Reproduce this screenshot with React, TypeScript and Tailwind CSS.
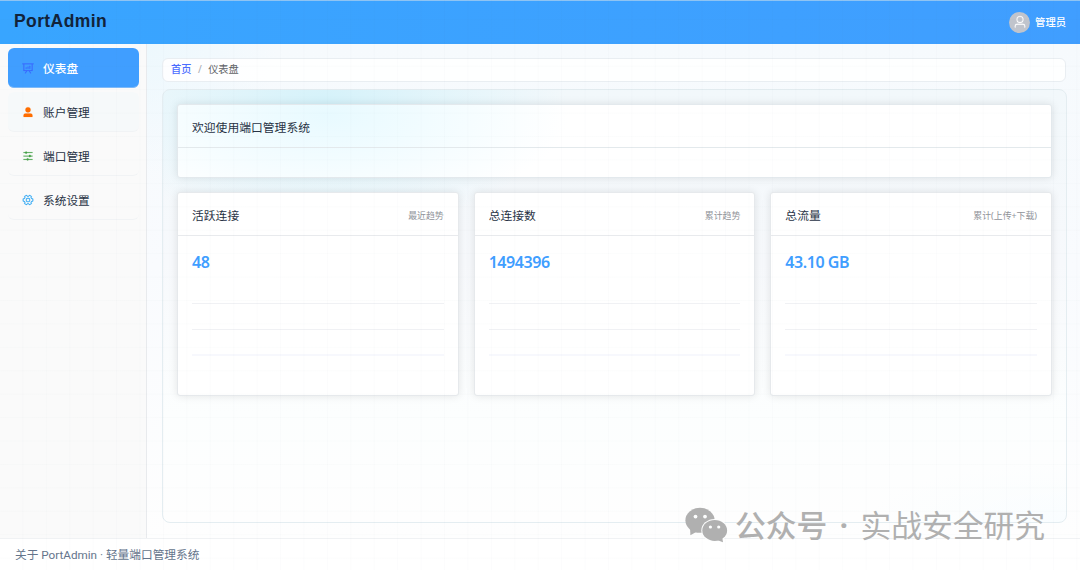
const MENU_ITEMS = [
  {
    label: "仪表盘",
    color: "text-[#3a63ff]",
    active: true,
    path: "m665.216 768 110.848 192h-73.856L591.36 768H433.024L322.176 960H248.32l110.848-192H160a32 32 0 0 1-32-32V192H64a32 32 0 0 1 0-64h896a32 32 0 1 1 0 64h-64v544a32 32 0 0 1-32 32zM832 192H192v512h640zM352 448a32 32 0 0 1 32 32v64a32 32 0 0 1-64 0v-64a32 32 0 0 1 32-32m160-64a32 32 0 0 1 32 32v128a32 32 0 0 1-64 0V416a32 32 0 0 1 32-32m160-64a32 32 0 0 1 32 32v192a32 32 0 1 1-64 0V352a32 32 0 0 1 32-32",
  },
  {
    label: "账户管理",
    color: "text-[#ff6d00]",
    tint: "bg-[#f6f9fa]",
    path: "M288 320a224 224 0 1 0 448 0 224 224 0 1 0-448 0m544 608H160a32 32 0 0 1-32-32v-96a160 160 0 0 1 160-160h448a160 160 0 0 1 160 160v96a32 32 0 0 1-32 32z",
  },
  {
    label: "端口管理",
    color: "text-[#43a047]",
    path: "M389.44 768a96.064 96.064 0 0 1 181.12 0H896v64H570.56a96.064 96.064 0 0 1-181.12 0H128v-64zm192-288a96.064 96.064 0 0 1 181.12 0H896v64H762.56a96.064 96.064 0 0 1-181.12 0H128v-64zm-320-288a96.064 96.064 0 0 1 181.12 0H896v64H442.56a96.064 96.064 0 0 1-181.12 0H128v-64z",
  },
  {
    label: "系统设置",
    color: "text-[#29a5f5]",
    turned: true,
    path: "M600.704 64a32 32 0 0 1 30.464 22.208l35.2 109.376c14.784 7.232 28.928 15.36 42.432 24.512l112.384-24.192a32 32 0 0 1 34.432 15.36L944.32 364.8a32 32 0 0 1-4.032 37.504l-77.12 85.12a357.12 357.12 0 0 1 0 49.024l77.12 85.248a32 32 0 0 1 4.032 37.504l-88.704 153.6a32 32 0 0 1-34.432 15.296L708.8 803.904c-13.44 9.088-27.648 17.28-42.368 24.512l-35.264 109.376A32 32 0 0 1 600.704 960H423.296a32 32 0 0 1-30.464-22.208L357.696 828.48a351.616 351.616 0 0 1-42.56-24.64l-112.32 24.256a32 32 0 0 1-34.432-15.36L79.68 659.2a32 32 0 0 1 4.032-37.504l77.12-85.248a357.12 357.12 0 0 1 0-48.896l-77.12-85.248A32 32 0 0 1 79.68 364.8l88.704-153.6a32 32 0 0 1 34.432-15.296l112.32 24.256c13.568-9.152 27.776-17.408 42.56-24.64l35.2-109.312A32 32 0 0 1 423.232 64H600.64zm-23.424 64H446.72l-36.352 113.088-24.512 11.968a294.113 294.113 0 0 0-34.816 20.096l-22.656 15.36-116.224-25.088-65.28 113.152 79.68 88.192-1.92 27.136a293.12 293.12 0 0 0 0 40.192l1.92 27.136-79.808 88.192 65.344 113.152 116.224-25.024 22.656 15.296a294.113 294.113 0 0 0 34.816 20.096l24.512 11.968L446.72 896h130.688l36.48-113.152 24.448-11.904a288.282 288.282 0 0 0 34.752-20.096l22.592-15.296 116.288 25.024 65.28-113.152-79.744-88.192 1.92-27.136a293.12 293.12 0 0 0 0-40.256l-1.92-27.136 79.808-88.128-65.344-113.152-116.288 24.96-22.592-15.232a287.616 287.616 0 0 0-34.752-20.096l-24.448-11.904L577.344 128zM512 320a192 192 0 1 1 0 384 192 192 0 0 1 0-384m0 64a128 128 0 1 0 0 256 128 128 0 0 0 0-256",
  },
];

const USER_PATH =
  "M512 512a192 192 0 1 0 0-384 192 192 0 0 0 0 384m0 64a256 256 0 1 1 0-512 256 256 0 0 1 0 512m320 320v-96a96 96 0 0 0-96-96H288a96 96 0 0 0-96 96v96a32 32 0 1 1-64 0v-96a160 160 0 0 1 160-160h448a160 160 0 0 1 160 160v96a32 32 0 1 1-64 0";

const STATS = [
  { title: "活跃连接", hint: "最近趋势", value: "48" },
  { title: "总连接数", hint: "累计趋势", value: "1494396" },
  { title: "总流量", hint: "累计(上传+下载)", value: "43.10 GB" },
];

function Icon({ path, className }: { path: string; className?: string }) {
  return (
    <svg viewBox="0 0 1024 1024" fill="currentColor" stroke="currentColor" strokeWidth="14" className={className}>
      <path d={path} />
    </svg>
  );
}

function WechatIcon() {
  return (
    <svg width="43" height="36" viewBox="0 0 43 36" fill="#b0b0b0">
      <path d="M5 20 L5.4 28.2 L12 24.5z" />
      <ellipse cx="15" cy="13.3" rx="14.6" ry="12.5" />
      <ellipse cx="29.7" cy="23.4" rx="13.4" ry="11.5" fill="#fdfefe" />
      <ellipse cx="29.7" cy="23.4" rx="12.4" ry="10.5" />
      <path d="M32 33 L38 35.3 L37.2 30z" />
      <g fill="#fdfefe">
        <circle cx="10.5" cy="9.6" r="1.9" />
        <circle cx="20" cy="9.6" r="1.9" />
        <circle cx="25.4" cy="20" r="1.6" />
        <circle cx="33.7" cy="20" r="1.6" />
      </g>
    </svg>
  );
}

function Header() {
  return (
    <header className="flex h-11 shrink-0 items-center justify-between border-t border-[#8fc4f3] bg-linear-to-r from-[#38a5ff] to-[#409eff] pr-3.5 pl-3.5">
      <span className="-mt-[3px] font-['Liberation_Sans',sans-serif] text-[17.5px] font-bold tracking-[0.4px] text-[#12233a]">
        PortAdmin
      </span>
      <div className="flex items-center gap-[5px]">
        <span className="flex h-[21px] w-[21px] items-center justify-center rounded-full bg-[#c0c4cc] text-white">
          <Icon path={USER_PATH} className="-mt-px h-3.5 w-3.5" />
        </span>
        <span className="text-[10.3px] font-medium text-white">管理员</span>
      </div>
    </header>
  );
}

function Sidebar() {
  return (
    <aside className="w-[147px] shrink-0 border-r border-[#e8eaed] bg-[#fafafa] pt-1 pr-[7px] pl-2">
      <nav className="flex flex-col gap-1">
        {MENU_ITEMS.map((item) => (
          <a
            key={item.label}
            className={
              item.active
                ? "flex h-10 items-center gap-[9px] rounded-md border-b border-[#7db9f8] bg-[#409eff] pt-0.5 pl-3.5 text-white"
                : `flex h-10 items-center gap-[9px] rounded-md border-b border-[#f1f3f5] pt-0.5 pl-3.5 text-[#273244] ${item.tint ?? ""}`
            }
          >
            <Icon
              path={item.path}
              className={`-mt-px h-3 w-3 ${item.color} ${item.turned ? "rotate-90" : ""}`}
            />
            <span className={item.active ? "text-[11.7px] font-medium" : "text-[11.7px]"}>{item.label}</span>
          </a>
        ))}
      </nav>
    </aside>
  );
}

function Breadcrumb() {
  return (
    <div className="mr-px flex h-6 shrink-0 items-center rounded-md border border-[#e9eef2] bg-white/90 px-2 text-[10.2px]">
      <span className="font-medium text-[#4a6cff]">首页</span>
      <span className="mx-[6.5px] text-[#a8abb2]">/</span>
      <span className="text-[#606266]">仪表盘</span>
    </div>
  );
}

function StatCard({ title, hint, value }: (typeof STATS)[number]) {
  return (
    <section className="h-[204px] flex-1 rounded-[3px] border border-[#e6e9ec] bg-white shadow-[0_0_9px_rgba(0,0,0,0.1)]">
      <div className="flex h-[43px] items-center justify-between border-b border-[#e8eaed] px-3.5">
        <h2 className="mt-[3px] text-[11.8px] text-[#273244]">{title}</h2>
        <span className="mt-1 text-[8.9px] text-[#909399]">{hint}</span>
      </div>
      <div className="px-3.5">
        <div className="pt-[15px] text-[16px] leading-[23px] font-semibold tracking-[-0.45px] text-[#409eff]">{value}</div>
        <div className="mt-[29px] h-[26px] border-t border-[#f0f1f4]" />
        <div className="h-[25px] border-t border-[#f0f1f4]" />
        <div className="border-t-2 border-[#f7f8fd]" />
      </div>
    </section>
  );
}

export default function App() {
  return (
    <div className="relative flex h-[570px] w-[1080px] flex-col overflow-hidden bg-white font-['Noto_Sans','Noto_Sans_CJK_SC',sans-serif]">
      <Header />
      <div className="flex min-h-0 flex-1">
        <Sidebar />
        <main className="flex flex-1 flex-col gap-[7px] bg-[radial-gradient(circle_at_0_0,#edf8fd_0,transparent_130px),linear-gradient(#f6fafd,#f9fbfe_45%,#fefefe)] pt-3.5 pr-[13px] pb-[15px] pl-[15px]">
          <Breadcrumb />
          <div className="flex flex-1 flex-col gap-3.5 rounded-lg border border-[#e4edf1] bg-[radial-gradient(ellipse_240px_130px_at_163px_12px,#d5f2fa_0,#d5f2fa00),radial-gradient(ellipse_200px_60px_at_100%_100%,#f9fdff_0,#f9fdff00),linear-gradient(#f2f8fb,#f7f9fc_40%,#fcfefe_75%,#fefefe)] p-3.5">
            <section className="h-[74px] shrink-0 rounded-[3px] border border-[#e3e9ed] bg-white bg-[radial-gradient(ellipse_240px_100px_at_150px_10px,#e8faff_0,#e8faff00)] shadow-[0_0_9px_rgba(0,0,0,0.1)]">
              <div className="flex h-[43px] items-center border-b border-[#e3e9ec] px-3.5">
                <h1 className="mt-[3px] text-[11.8px] text-[#273244]">欢迎使用端口管理系统</h1>
              </div>
            </section>
            <div className="flex gap-[15px]">
              {STATS.map((stat) => (
                <StatCard key={stat.title} {...stat} />
              ))}
            </div>
          </div>
        </main>
      </div>
      <footer className="flex h-8 shrink-0 items-center border-t border-[#f0f2f4] bg-white pt-[3px] pl-[15px] font-['Roboto','Noto_Sans_CJK_SC',sans-serif] text-[11.7px] text-[#64748b]">
        关于 PortAdmin · 轻量端口管理系统
      </footer>

      {/* faint grid over the whole page */}
      <div className="pointer-events-none absolute inset-0 bg-[linear-gradient(to_right,rgba(60,80,100,0.016)_1px,transparent_1px),linear-gradient(to_bottom,rgba(60,80,100,0.016)_1px,transparent_1px)] bg-size-[23.43px_23.43px] bg-position-[-1px_-4.5px]" />

      {/* watermark */}
      <div className="pointer-events-none absolute top-[503px] left-[685px] flex items-center whitespace-nowrap text-[#b0b0b0]">
        <WechatIcon />
        <span className="ml-[7px] text-[30.8px] leading-[44px] font-medium">公众号</span>
        <span className="w-[33px] text-center text-[29px] leading-[44px] font-bold">·</span>
        <span className="text-[30.8px] leading-[44px]">实战安全研究</span>
      </div>
    </div>
  );
}
